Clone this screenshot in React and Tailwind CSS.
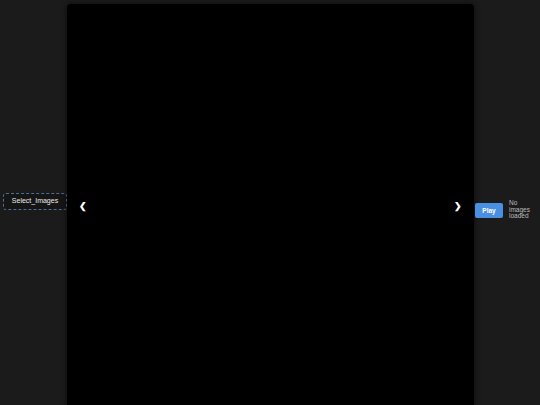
import React, { useState } from "react";

const App = () => {
  const [images] = useState([]);

  return (
    <div
      className="w-[540px] h-[405px] overflow-hidden bg-[#1b1b1b] flex items-start"
      style={{ fontFamily: '"Liberation Sans", Arial, sans-serif' }}
    >
      {/* file picker */}
      <button className="mt-[193px] ml-[3px] w-[64px] h-[17px] flex items-center justify-center rounded-[3px] border border-dashed border-[#4d6f91] bg-[#151515] text-[7px] text-[#ececec]">
        Select_Images
      </button>

      {/* viewer */}
      <div className="mt-[4px] w-[407px] h-[404px] shrink-0 bg-black rounded-t-[4px] shadow-[0_0_6px_rgba(0,0,0,0.6)] flex items-center justify-between px-[12px]">
        <span className="text-white text-[9px] font-bold leading-none">❮</span>
        <span className="text-white text-[9px] font-bold leading-none">❯</span>
      </div>

      {/* controls */}
      <div className="mt-[200px] ml-[1px] flex items-start gap-[6px]">
        <button className="mt-[3px] w-[28px] h-[15px] rounded-[2px] bg-[#4a90e2] text-white text-[6.5px] font-bold flex items-center justify-center">
          Play
        </button>
        <p className="w-[24px] text-[6.5px] leading-[6.5px] text-[#bdbdbd]">
          {images.length === 0 ? "No images loaded" : `${images.length} images`}
        </p>
      </div>
    </div>
  );
};

export default App;
